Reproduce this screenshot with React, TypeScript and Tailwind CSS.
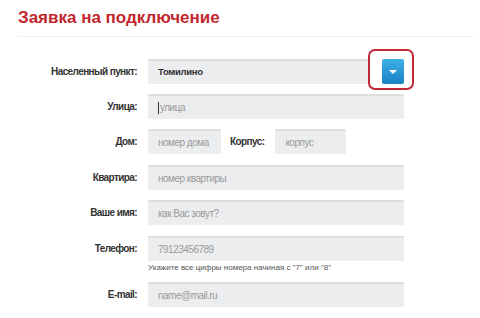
const font = { fontFamily: '"Liberation Sans", Arial, sans-serif' };

function Field({ w, children, muted = true }: { w: string; children: React.ReactNode; muted?: boolean }) {
  return (
    <div
      className={`${w} h-[25px] bg-[#ecedee] border-t-2 border-[#dcdedf] rounded-[2px] flex items-center px-[10px] whitespace-nowrap ${
        muted ? 'text-[10px] tracking-[-0.5px] text-[#9a9a9a]' : 'text-[9.5px] tracking-[-0.3px] text-[#333] font-bold'
      }`}
    >
      {children}
    </div>
  );
}

function Row({ label, mt, children }: { label: string; mt: string; children: React.ReactNode }) {
  return (
    <div className={`flex items-center ${mt}`}>
      <div className="w-[138px] pr-[1px] text-right text-[10px] tracking-[-0.6px] font-bold text-[#333]">{label}</div>
      <div className="ml-[10px] flex items-center">{children}</div>
    </div>
  );
}

export default function App() {
  return (
    <div className="w-[480px] h-[318px] bg-white overflow-hidden" style={font}>
      <div className="pl-[18px] pt-[7px]">
        <h1 className="text-[17px] font-bold text-[#c1272d] leading-[22px]">Заявка на подключение</h1>
        <div className="mt-[7px] h-px bg-[#f0f0f0] mr-[6px]" />
      </div>

      <div className="mt-[22px]">
        <Row label="Населенный пункт:" mt="">
          <Field w="w-[222px]" muted={false}>
            Томилино
          </Field>
          <div className="relative ml-[12px]">
            <div className="w-[22px] h-[25px] rounded-[2px] bg-gradient-to-b from-[#3fb0e6] to-[#1682c6] flex items-center justify-center">
              <div className="w-0 h-0 border-l-[4px] border-r-[4px] border-t-[4px] border-l-transparent border-r-transparent border-t-white" />
            </div>
            <div className="absolute left-[-14px] top-[-10px] w-[46px] h-[41px] border-[2.5px] border-[#c1283a] rounded-[7px]" />
          </div>
        </Row>

        <Row label="Улица:" mt="mt-[10px]">
          <Field w="w-[256px]">
            <span className="w-px h-[12px] bg-[#333] mr-px" />
            улица
          </Field>
        </Row>

        <Row label="Дом:" mt="mt-[10px]">
          <Field w="w-[73px]">номер дома</Field>
          <span className="ml-[9px] text-[10px] tracking-[-0.6px] font-bold text-[#333]">Корпус:</span>
          <div className="ml-[11px]">
            <Field w="w-[71px]">корпус</Field>
          </div>
        </Row>

        <Row label="Квартира:" mt="mt-[11px]">
          <Field w="w-[256px]">номер квартиры</Field>
        </Row>

        <Row label="Ваше имя:" mt="mt-[10px]">
          <Field w="w-[256px]">как Вас зовут?</Field>
        </Row>

        <Row label="Телефон:" mt="mt-[11px]">
          <Field w="w-[256px]">79123456789</Field>
        </Row>
        <div className="ml-[148px] mt-[1px] text-[8px] leading-[12px] text-[#555]">
          Укажите все цифры номера начиная с "7" или "8"
        </div>

        <Row label="E-mail:" mt="mt-[8px]">
          <Field w="w-[256px]">name@mail.ru</Field>
        </Row>
      </div>
    </div>
  );
}
